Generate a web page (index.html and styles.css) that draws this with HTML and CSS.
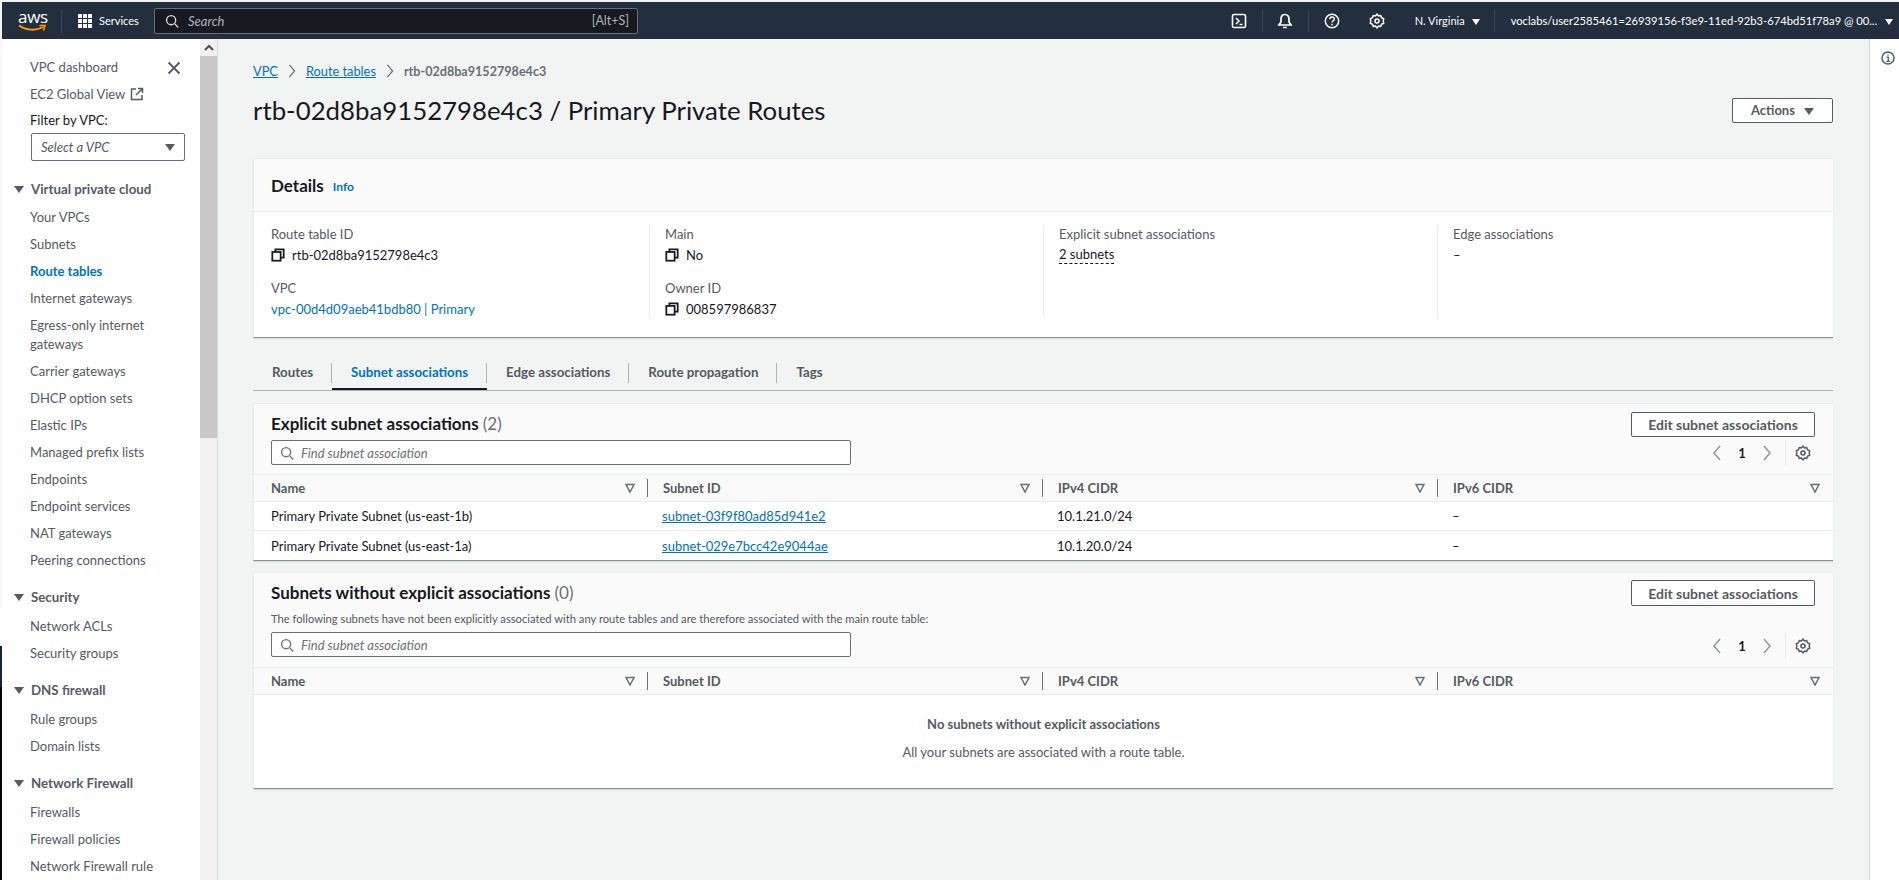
FILE: index.html
```html
<!DOCTYPE html>
<html lang="en">
<head>
  <meta charset="UTF-8">
  <title>Route tables | VPC Console</title>
  <link rel="stylesheet" href="styles.css">
</head>
<body>
  <svg class="defs" width="0" height="0">
    <symbol id="i-search" viewBox="0 0 16 16"><circle cx="7" cy="7" r="5.2" fill="none" stroke="currentColor" stroke-width="1.6"/><path d="M11 11l4 4.4" fill="none" stroke="currentColor" stroke-width="1.6"/></symbol>
    <symbol id="i-copy" viewBox="0 0 16 16"><path d="M5 4.500V1.500h9.500v9.500H11.500" fill="none" stroke="currentColor" stroke-width="2"/><rect x="1.500" y="4.500" width="9.500" height="10" fill="none" stroke="currentColor" stroke-width="2"/></symbol>
    <symbol id="i-filter" viewBox="0 0 10 10"><path d="M1 1.500h8L5 9z" fill="none" stroke="currentColor" stroke-width="1.500"/></symbol>
    <symbol id="i-gear" viewBox="0 0 16 16"><circle cx="8" cy="8" r="2" fill="none" stroke="currentColor" stroke-width="1.600"/><path d="M8 1l1.400 1.900 2.300-.4.800 2.200 2.200.9-.5 2.400.5 2.400-2.200.9-.8 2.200-2.300-.4L8 15l-1.400-1.900-2.300.4-.8-2.200-2.200-.9.5-2.400-.5-2.400 2.200-.9.800-2.200 2.300.4z" fill="none" stroke="currentColor" stroke-width="1.500" stroke-linejoin="round"/></symbol>
    <symbol id="i-left" viewBox="0 0 10 16"><path d="M8 1L2 8l6 7" fill="none" stroke="currentColor" stroke-width="1.400"/></symbol>
    <symbol id="i-right" viewBox="0 0 10 16"><path d="M2 1l6 7-6 7" fill="none" stroke="currentColor" stroke-width="1.400"/></symbol>
  </svg>

  <header class="topbar">
    <div class="logo">
      <span class="logo-text">aws</span>
      <svg class="smile" viewBox="0 0 28 8"><path d="M1 1.500c7 5 17 5.500 24 1.500" fill="none" stroke="#ff9900" stroke-width="2"/><path d="M21.500 1.500h5.500l-1.500 5" fill="none" stroke="#ff9900" stroke-width="1.600"/></svg>
    </div>
    <div class="services">
      <span class="grid-icon"><i></i><i></i><i></i><i></i><i></i><i></i><i></i><i></i><i></i></span>
      <span>Services</span>
    </div>
    <div class="top-search">
      <svg class="ico14"><use href="#i-search"/></svg>
      <em>Search</em>
      <span class="hint">[Alt+S]</span>
    </div>
    <div class="top-right">
      <span class="top-ico sep">
        <svg width="16" height="16" viewBox="0 0 16 16"><rect x="1.500" y="1.500" width="13" height="13" rx="1.500" fill="none" stroke="#fff" stroke-width="1.600"/><path d="M5 5l3 3-3 3M8.500 11.500h3" fill="none" stroke="#fff" stroke-width="1.500"/></svg>
      </span>
      <span class="top-ico sep">
        <svg width="16" height="16" viewBox="0 0 16 16"><path d="M8 1.500c-3 0-4 2.400-4 4.500v3l-2 3h12l-2-3V6c0-2.100-1-4.500-4-4.500zM6 14.500h4" fill="none" stroke="#fff" stroke-width="1.700"/></svg>
      </span>
      <span class="top-ico">
        <svg width="16" height="16" viewBox="0 0 16 16"><circle cx="8" cy="8" r="6.700" fill="none" stroke="#fff" stroke-width="1.500"/><path d="M5.800 6.200c0-3 4.600-2.900 4.500-.1 0 1.800-2.300 1.700-2.300 3.500M8 10.800v1.600" fill="none" stroke="#fff" stroke-width="1.400"/></svg>
      </span>
      <span class="top-ico gear-ico">
        <svg width="16" height="16"><use href="#i-gear"/></svg>
      </span>
      <span class="region">N. Virginia <b class="tri tri-w"></b></span>
      <span class="account">voclabs/user2585461=26939156-f3e9-11ed-92b3-674bd51f78a9 @ 00... <b class="tri tri-w"></b></span>
    </div>
  </header>

  <div class="layout">
    <nav class="sidenav">
      <div class="nav-scroll">
        <div class="nav-top">
          <a class="nav-link">VPC dashboard</a>
          <svg class="nav-close" viewBox="0 0 14 14"><path d="M1.500 1.500l11 11M12.500 1.500l-11 11" stroke="#545b64" stroke-width="1.900"/></svg>
        </div>
        <a class="nav-link">EC2 Global View
          <svg class="ext" width="14" height="14" viewBox="0 0 14 14"><path d="M6 2H1.500v10.500H12V8M8 1.500h4.500V6M12.500 1.500L6 8" fill="none" stroke="#545b64" stroke-width="1.500"/></svg>
        </a>
        <div class="nav-filter">Filter by VPC:</div>
        <div class="nav-select"><em>Select a VPC</em><b class="tri tri-d"></b></div>

        <div class="nav-group first"><b class="tri tri-d"></b>Virtual private cloud</div>
        <a class="nav-link">Your VPCs</a>
        <a class="nav-link">Subnets</a>
        <a class="nav-link active">Route tables</a>
        <a class="nav-link">Internet gateways</a>
        <a class="nav-link two">Egress-only internet gateways</a>
        <a class="nav-link">Carrier gateways</a>
        <a class="nav-link">DHCP option sets</a>
        <a class="nav-link">Elastic IPs</a>
        <a class="nav-link">Managed prefix lists</a>
        <a class="nav-link">Endpoints</a>
        <a class="nav-link">Endpoint services</a>
        <a class="nav-link">NAT gateways</a>
        <a class="nav-link">Peering connections</a>

        <div class="nav-group"><b class="tri tri-d"></b>Security</div>
        <a class="nav-link">Network ACLs</a>
        <a class="nav-link">Security groups</a>

        <div class="nav-group"><b class="tri tri-d"></b>DNS firewall</div>
        <a class="nav-link">Rule groups</a>
        <a class="nav-link">Domain lists</a>

        <div class="nav-group"><b class="tri tri-d"></b>Network Firewall</div>
        <a class="nav-link">Firewalls</a>
        <a class="nav-link">Firewall policies</a>
        <a class="nav-link">Network Firewall rule</a>
      </div>
      <div class="scrollbar">
        <div class="scroll-up"><svg width="10" height="7" viewBox="0 0 10 7"><path d="M1 6l4-4 4 4" fill="none" stroke="#505050" stroke-width="2"/></svg></div>
        <div class="scroll-thumb"></div>
      </div>
      <div class="edge-strip"></div>
    </nav>

    <main class="content">
      <div class="crumbs">
        <a>VPC</a>
        <svg width="10" height="14"><use href="#i-right"/></svg>
        <a>Route tables</a>
        <svg width="10" height="14"><use href="#i-right"/></svg>
        <span>rtb-02d8ba9152798e4c3</span>
      </div>

      <div class="page-head">
        <h1>rtb-02d8ba9152798e4c3 / Primary Private Routes</h1>
        <button class="btn btn-actions">Actions <b class="tri tri-d"></b></button>
      </div>

      <section class="card details">
        <div class="card-head details-head"><h2>Details</h2><a class="info">Info</a></div>
        <div class="details-grid">
          <div class="col">
            <label>Route table ID</label>
            <p><svg class="copy"><use href="#i-copy"/></svg>rtb-02d8ba9152798e4c3</p>
            <label>VPC</label>
            <p><a class="plain">vpc-00d4d09aeb41bdb80 | Primary</a></p>
          </div>
          <div class="col">
            <label>Main</label>
            <p><svg class="copy"><use href="#i-copy"/></svg>No</p>
            <label>Owner ID</label>
            <p><svg class="copy"><use href="#i-copy"/></svg>008597986837</p>
          </div>
          <div class="col">
            <label>Explicit subnet associations</label>
            <p><span class="dotted">2 subnets</span></p>
          </div>
          <div class="col">
            <label>Edge associations</label>
            <p>–</p>
          </div>
        </div>
      </section>

      <div class="tabs">
        <a class="tab">Routes</a>
        <a class="tab active">Subnet associations</a>
        <a class="tab">Edge associations</a>
        <a class="tab">Route propagation</a>
        <a class="tab last">Tags</a>
      </div>

      <section class="card assoc">
        <div class="card-head table-head">
          <div class="head-left">
            <h2>Explicit subnet associations <span class="count">(2)</span></h2>
            <div class="find"><svg class="ico14"><use href="#i-search"/></svg><em>Find subnet association</em></div>
          </div>
          <div class="head-right">
            <button class="btn">Edit subnet associations</button>
            <div class="pager">
              <svg class="chev" width="10" height="16"><use href="#i-left"/></svg>
              <span>1</span>
              <svg class="chev" width="10" height="16"><use href="#i-right"/></svg>
              <i class="pager-sep"></i>
              <svg class="pager-gear" width="16" height="16"><use href="#i-gear"/></svg>
            </div>
          </div>
        </div>
        <div class="t-row t-header">
          <div>Name<svg class="flt"><use href="#i-filter"/></svg></div>
          <div>Subnet ID<svg class="flt"><use href="#i-filter"/></svg></div>
          <div>IPv4 CIDR<svg class="flt"><use href="#i-filter"/></svg></div>
          <div>IPv6 CIDR<svg class="flt"><use href="#i-filter"/></svg></div>
        </div>
        <div class="t-row">
          <div>Primary Private Subnet (us-east-1b)</div>
          <div><a>subnet-03f9f80ad85d941e2</a></div>
          <div>10.1.21.0/24</div>
          <div>–</div>
        </div>
        <div class="t-row">
          <div>Primary Private Subnet (us-east-1a)</div>
          <div><a>subnet-029e7bcc42e9044ae</a></div>
          <div>10.1.20.0/24</div>
          <div>–</div>
        </div>
      </section>

      <section class="card without">
        <div class="card-head table-head">
          <div class="head-left">
            <h2>Subnets without explicit associations <span class="count">(0)</span></h2>
            <p class="desc">The following subnets have not been explicitly associated with any route tables and are therefore associated with the main route table:</p>
            <div class="find"><svg class="ico14"><use href="#i-search"/></svg><em>Find subnet association</em></div>
          </div>
          <div class="head-right">
            <button class="btn tall">Edit subnet associations</button>
            <div class="pager low">
              <svg class="chev" width="10" height="16"><use href="#i-left"/></svg>
              <span>1</span>
              <svg class="chev" width="10" height="16"><use href="#i-right"/></svg>
              <i class="pager-sep"></i>
              <svg class="pager-gear" width="16" height="16"><use href="#i-gear"/></svg>
            </div>
          </div>
        </div>
        <div class="t-row t-header">
          <div>Name<svg class="flt"><use href="#i-filter"/></svg></div>
          <div>Subnet ID<svg class="flt"><use href="#i-filter"/></svg></div>
          <div>IPv4 CIDR<svg class="flt"><use href="#i-filter"/></svg></div>
          <div>IPv6 CIDR<svg class="flt"><use href="#i-filter"/></svg></div>
        </div>
        <div class="empty">
          <strong>No subnets without explicit associations</strong>
          <span>All your subnets are associated with a route table.</span>
        </div>
      </section>
    </main>

    <aside class="rightbar">
      <svg width="14" height="14" viewBox="0 0 14 14"><circle cx="7" cy="7" r="6" fill="none" stroke="#545b64" stroke-width="1.500"/><path d="M5.500 6.200H7.300V10.200M5.500 10.400h3.600M7 3.400v1.400" fill="none" stroke="#545b64" stroke-width="1.300"/></svg>
    </aside>
  </div>
</body>
</html>
```

FILE: styles.css
```css
* {
  margin: 0;
  padding: 0;
  box-sizing: border-box;
}

html, body {
  height: 880px;
  overflow: hidden;
}

body {
  font-family: 'Lato', 'Liberation Sans', sans-serif;
  font-size: 13px;
  color: #16191f;
  background: #f2f3f3;
  padding-top: 2px;
}

.defs {
  position: absolute;
}

a {
  color: #0073bb;
}

/* top bar */
.topbar {
  height: 37px;
  margin-left: 2px;
  background: #232f3e;
  display: flex;
  align-items: center;
  color: #fff;
  font-size: 11px;
}

.logo {
  width: 44px;
  height: 24px;
  margin-left: 16px;
  border-right: 1px solid #414750;
  flex: none;
}

.logo-text {
  display: block;
  font-size: 17px;
  line-height: 15px;
  letter-spacing: -.3px;
  font-family: 'Open Sans', sans-serif;
}

.smile {
  display: block;
  width: 28px;
  height: 8px;
}

.services {
  width: 76px;
  margin-left: 16px;
  display: flex;
  align-items: center;
  gap: 7px;
  flex: none;
}

.grid-icon {
  width: 14px;
  height: 14px;
  display: grid;
  grid-template-columns: repeat(3, 4px);
  grid-auto-rows: 4px;
  gap: 1px;
}

.grid-icon i {
  background: #fff;
}

.top-search {
  width: 484px;
  height: 26px;
  background: #16191f;
  border: 1px solid #687078;
  border-radius: 2px;
  display: flex;
  align-items: center;
  padding: 0 8px 0 10px;
  color: #aab7b8;
  font-size: 13px;
  flex: none;
}

.top-search em {
  margin-left: 9px;
  flex: 1;
}

.hint {
  font-size: 12.500px;
}

.ico14 {
  width: 14px;
  height: 14px;
  flex: none;
}

.top-search .ico14 {
  color: #d5dbdb;
}

.top-right {
  margin-left: auto;
  display: flex;
  align-items: center;
  height: 100%;
  padding-right: 6px;
}

.top-ico {
  width: 46px;
  height: 22px;
  display: flex;
  align-items: center;
  justify-content: center;
}

.top-ico.sep {
  border-right: 1px solid #414750;
}

.gear-ico {
  color: #fff;
  width: 44px;
}

.region {
  margin-left: 16px;
  width: 80px;
  height: 22px;
  line-height: 22px;
  border-right: 1px solid #414750;
  white-space: nowrap;
}

.account {
  margin-left: 16px;
  white-space: nowrap;
  font-size: 11.200px;
}

.tri {
  display: inline-block;
  width: 0;
  height: 0;
  border-left: 5px solid transparent;
  border-right: 5px solid transparent;
  border-top: 7px solid #545b64;
}

.tri-w {
  border-top-color: #fff;
  border-left-width: 4px;
  border-right-width: 4px;
  border-top-width: 6px;
  margin-left: 5px;
}

/* layout */
.layout {
  display: flex;
  height: 841px;
}

.sidenav {
  width: 218px;
  flex: none;
  display: flex;
  position: relative;
  background: #fff;
}

.nav-scroll {
  width: 200px;
  flex: none;
  padding: 15px 0 0 30px;
  overflow: hidden;
}

.nav-link {
  display: block;
  height: 27px;
  line-height: 27px;
  color: #545b64;
  white-space: nowrap;
}

.nav-link.two {
  height: 46px;
  line-height: 19px;
  padding-top: 4px;
  white-space: normal;
  width: 150px;
}

.nav-link.active {
  color: #0073bb;
  font-weight: 700;
}

.nav-top {
  display: flex;
  align-items: center;
  justify-content: space-between;
  padding-right: 19px;
}

.nav-close {
  width: 14px;
  height: 14px;
}

.ext {
  vertical-align: -2px;
  margin-left: 2px;
}

.nav-filter {
  height: 24px;
  line-height: 24px;
  color: #16191f;
}

.nav-select {
  width: 154px;
  height: 28px;
  margin: 1px 0 0 1px;
  border: 1px solid #687078;
  border-radius: 2px;
  display: flex;
  align-items: center;
  justify-content: space-between;
  padding: 0 9px;
  color: #545b64;
}

.nav-group {
  margin: 10px 0 2px -16px;
  height: 27px;
  line-height: 27px;
  font-weight: 700;
  font-size: 13.300px;
  color: #545b64;
}

.nav-group.first {
  margin-top: 15px;
  margin-bottom: 1px;
}

.nav-group .tri {
  margin-right: 7px;
  vertical-align: 1px;
}

.scrollbar {
  width: 18px;
  flex: none;
  background: #f1f1f1;
  border-right: 1px solid #d5dbdb;
}

.scroll-up {
  height: 17px;
  display: flex;
  align-items: center;
  justify-content: center;
}

.scroll-thumb {
  height: 382px;
  background: #c8c8c8;
}

/* stray window edge along the left of the capture */
.edge-strip {
  position: absolute;
  left: 0;
  top: 0;
  bottom: 0;
  width: 2px;
  background: linear-gradient(#f6f6fb 569px, #fff 569px, #fff 607px, #16233a 607px, #16233a 648px, #050505 648px);
}

.content {
  flex: 1;
  min-width: 0;
  padding: 0 36px 0 35px;
}

.rightbar {
  width: 30px;
  flex: none;
  background: #fff;
  border-left: 1px solid #d5dbdb;
  padding: 12px 0 0 11px;
}

/* breadcrumbs and title */
.crumbs {
  height: 22px;
  margin-top: 21px;
  display: flex;
  align-items: center;
  gap: 9px;
  font-size: 12.800px;
  color: #687078;
}

.crumbs a {
  text-decoration: underline;
}

.crumbs svg {
  color: #687078;
}

.crumbs span {
  font-weight: 700;
  font-size: 12.600px;
}

.page-head {
  height: 36px;
  margin-top: 10px;
  display: flex;
  align-items: center;
  justify-content: space-between;
}

h1 {
  font-size: 25.800px;
  font-weight: 400;
  color: #16191f;
}

.btn {
  background: #fff;
  border: 1px solid #545b64;
  border-radius: 2px;
  height: 25px;
  width: 184px;
  font: 700 14px 'Lato', sans-serif;
  color: #545b64;
}

.btn-actions {
  width: 101px;
  font-size: 13px;
}

.btn-actions .tri {
  margin-left: 6px;
}

.btn.tall {
  height: 26px;
}

/* cards */
.card {
  background: #fff;
  border-top: 1px solid #eaeded;
  border-left: 1px solid #eaeded;
  border-bottom: 1px solid #879596;
  box-shadow: 0 1px 1px rgba(0, 28, 36, .1);
}

.card-head {
  background: #fafafa;
}

.details {
  margin-top: 30px;
  height: 180px;
}

.details-head {
  height: 53px;
  border-bottom: 1px solid #eaeded;
  display: flex;
  align-items: center;
  padding-left: 17px;
  gap: 9px;
}

h2 {
  font-size: 17px;
  font-weight: 700;
  color: #16191f;
}

.info {
  font-size: 12px;
  font-weight: 700;
  margin-top: 3px;
}

.details-grid {
  display: grid;
  grid-template-columns: repeat(4, 394px);
  padding: 13px 0 0 2px;
}

.col {
  height: 92px;
  padding-left: 15px;
  border-right: 1px solid #eaeded;
}

.col:last-child {
  border-right: 0;
}

.col label {
  display: block;
  height: 19px;
  line-height: 19px;
  color: #545b64;
}

.col p {
  height: 22px;
  line-height: 22px;
  margin-bottom: 13px;
  display: flex;
  align-items: center;
}

.copy {
  width: 14px;
  height: 14px;
  margin-right: 7px;
  flex: none;
}

.plain {
  text-decoration: none;
}

.dotted {
  border-bottom: 1px dashed #16191f;
  line-height: 17px;
}

/* tabs */
.tabs {
  margin-top: 19px;
  height: 34px;
  border-bottom: 1px solid #aab7b8;
  display: flex;
  align-items: center;
}

.tab {
  height: 100%;
  display: flex;
  align-items: center;
  padding: 0 19px 3px;
  color: #545b64;
  font-weight: 700;
  font-size: 13.300px;
  position: relative;
}

.tab::after {
  content: "";
  position: absolute;
  right: 0;
  top: 6px;
  height: 20px;
  border-right: 1px solid #aab7b8;
}

.tab.last::after {
  display: none;
}

.tab.active {
  color: #0073bb;
  box-shadow: inset 0 -2px 0 #16191f;
}

/* table cards */
.assoc {
  margin-top: 12px;
  height: 158px;
}

.without {
  margin-top: 11px;
  height: 217px;
}

.table-head {
  display: flex;
  justify-content: space-between;
  padding: 0 18px 0 17px;
  border-bottom: 1px solid #eaeded;
}

.assoc .table-head {
  height: 71px;
}

.without .table-head {
  height: 95px;
}

.head-left h2 {
  height: 22px;
  line-height: 22px;
  margin-top: 9px;
}

.count {
  font-weight: 400;
  color: #687078;
}

.desc {
  font-size: 11.200px;
  color: #545b64;
  height: 16px;
  line-height: 16px;
  margin-top: 7px;
}

.find {
  width: 580px;
  height: 25px;
  margin-top: 5px;
  background: #fff;
  border: 1px solid #687078;
  border-radius: 2px;
  display: flex;
  align-items: center;
  gap: 7px;
  padding-left: 8px;
  color: #687078;
}

.head-right {
  display: flex;
  flex-direction: column;
  align-items: flex-end;
  padding-top: 8px;
}

.without .head-right {
  padding-top: 7px;
}

.pager {
  display: flex;
  align-items: center;
  height: 30px;
  margin-top: 1px;
  padding-right: 4px;
}

.pager.low {
  margin-top: 25px;
}

.pager span {
  width: 40px;
  text-align: center;
  font-weight: 700;
}

.chev {
  color: #879596;
}

.pager-sep {
  width: 1px;
  height: 26px;
  background: #eaeded;
  margin: 0 9px 0 13px;
}

.pager-gear {
  color: #545b64;
}

.t-row {
  display: grid;
  grid-template-columns: 393px repeat(3, 395px);
  height: 29px;
  align-items: center;
  border-bottom: 1px solid #eaeded;
}

.t-row a {
  text-decoration: underline;
}

.t-row:last-child {
  border-bottom: 0;
}

.t-row > div {
  padding-left: 15px;
}

.t-row > div:first-child {
  padding-left: 17px;
}

.t-header {
  height: 27px;
  background: #fafafa;
  color: #545b64;
  font-weight: 700;
}

.t-header > div {
  position: relative;
  height: 100%;
  line-height: 26px;
}

.t-header > div + div {
  border-left: 1px solid #687078;
  height: 18px;
  line-height: 18px;
}

.flt {
  position: absolute;
  right: 12px;
  top: 50%;
  margin-top: -5px;
  width: 10px;
  height: 10px;
  color: #687078;
}

.empty {
  display: flex;
  flex-direction: column;
  align-items: center;
  padding-top: 21px;
  gap: 12px;
  color: #545b64;
}
```
